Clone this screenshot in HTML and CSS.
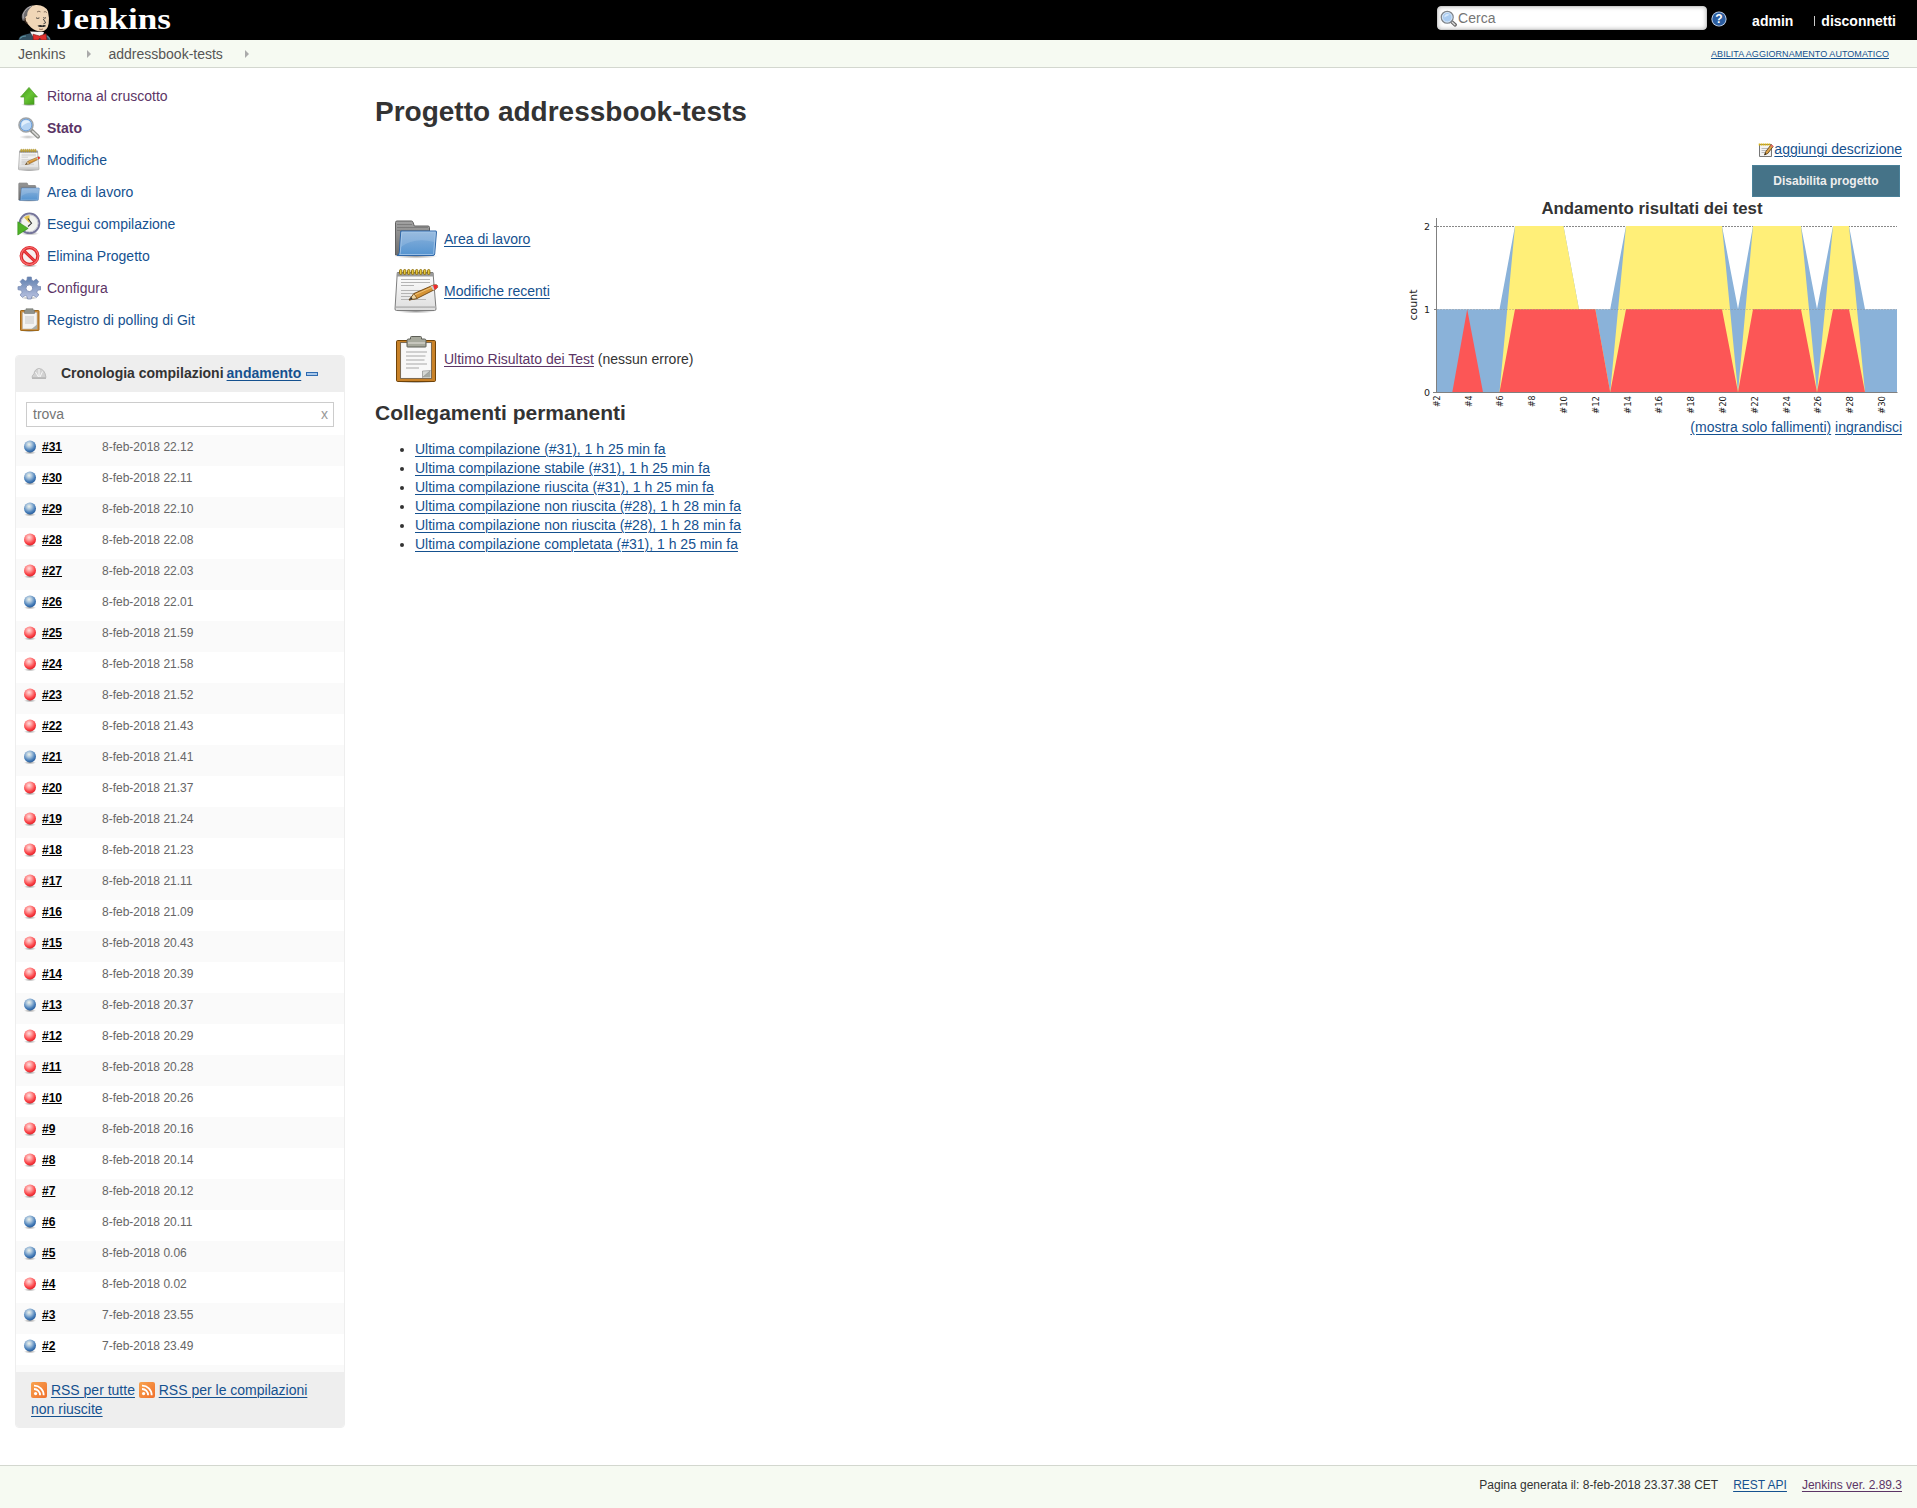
FILE: index.html
```html
<!DOCTYPE html>
<html lang="it">
<head>
<meta charset="utf-8">
<title>addressbook-tests [Jenkins]</title>
<link rel="stylesheet" href="styles.css">
</head>
<body>
<svg class="defs" width="0" height="0" aria-hidden="true">
  <defs>
    <radialGradient id="gBlue" cx=".42" cy=".32" r=".66"><stop offset="0" stop-color="#f0f3ea"/><stop offset=".35" stop-color="#a9c4dc"/><stop offset=".75" stop-color="#4a80ba"/><stop offset="1" stop-color="#2a5f9e"/></radialGradient>
    <radialGradient id="gRed" cx=".42" cy=".32" r=".66"><stop offset="0" stop-color="#ffe0e0"/><stop offset=".35" stop-color="#ff9c9c"/><stop offset=".75" stop-color="#fb4448"/><stop offset="1" stop-color="#e2242c"/></radialGradient>
    <linearGradient id="gFolder" x1="0" y1="0" x2="0" y2="1"><stop offset="0" stop-color="#8cb3dc"/><stop offset="1" stop-color="#5594d0"/></linearGradient>
    <linearGradient id="gGrey" x1="0" y1="0" x2="0" y2="1"><stop offset="0" stop-color="#a2a2a2"/><stop offset="1" stop-color="#6c6c6c"/></linearGradient>
    <linearGradient id="gPaper" x1="0" y1="0" x2="0" y2="1"><stop offset="0" stop-color="#ffffff"/><stop offset="1" stop-color="#dedede"/></linearGradient>
    <linearGradient id="gUp" x1="0" y1="0" x2="1" y2="1"><stop offset="0" stop-color="#3f9a18"/><stop offset=".5" stop-color="#69c436"/><stop offset="1" stop-color="#3a9810"/></linearGradient>
    <linearGradient id="gGear" x1="0" y1="0" x2="0" y2="1"><stop offset="0" stop-color="#5f7fae"/><stop offset="1" stop-color="#bcc4e2"/></linearGradient>
    <linearGradient id="gRss" x1="0" y1="0" x2="1" y2="1"><stop offset="0" stop-color="#f8a450"/><stop offset="1" stop-color="#f0702c"/></linearGradient>
    <radialGradient id="gShade"><stop offset="0" stop-color="#000" stop-opacity=".4"/><stop offset="1" stop-color="#000" stop-opacity="0"/></radialGradient>
  </defs>
  <symbol id="ball-blue" viewBox="0 0 16 16"><ellipse cx="8" cy="13.6" rx="6" ry="1.8" fill="url(#gShade)"/><circle cx="8" cy="7.6" r="6" fill="url(#gBlue)"/></symbol>
  <symbol id="ball-red" viewBox="0 0 16 16"><ellipse cx="8" cy="13.6" rx="6" ry="1.8" fill="url(#gShade)"/><circle cx="8" cy="7.6" r="6" fill="url(#gRed)"/></symbol>
  <symbol id="up" viewBox="0 0 24 24"><ellipse cx="12" cy="20.6" rx="8" ry="1.7" fill="url(#gShade)"/><path d="M12 3.4 20.4 13H17v7.3H7.4V13H3.6z" fill="url(#gUp)" stroke="#4a9a24" stroke-width=".7"/></symbol>
  <symbol id="search" viewBox="0 0 24 24"><ellipse cx="11" cy="21" rx="9" ry="2" fill="url(#gShade)" opacity=".6"/><path d="M14.5 14.5 21 20.6" stroke="#8b8d88" stroke-width="4" stroke-linecap="round"/><path d="M15.6 15.4 20.9 20.4" stroke="#d8d8d6" stroke-width="1.6" stroke-linecap="round"/><circle cx="9" cy="9" r="7" fill="#b5d3f3" stroke="#a0a4a6" stroke-width="1.6"/><circle cx="9" cy="9" r="5.8" fill="none" stroke="#5f97d6" stroke-width=".8"/><path d="M4.6 8.6A4.6 4.6 0 0 1 9 4.2c2.4 0 3.6 1 4.2 2.4C10 6.800 7 8 4.600 11z" fill="#e2effc"/></symbol>
  <symbol id="search-small" viewBox="0 0 16 16"><path d="M10.500 10.500 14.300 14" stroke="#666" stroke-width="3.200" stroke-linecap="round"/><path d="M11.500 11.500 14 13.800" stroke="#ddd" stroke-width="1.300" stroke-linecap="round"/><circle cx="6.800" cy="6.800" r="5.600" fill="#a9cbf0" stroke="#808488" stroke-width="1.200"/><circle cx="6.800" cy="6.800" r="4.500" fill="none" stroke="#dfeaf5" stroke-width=".8"/><path d="M4 7a3 3 0 0 1 5-2.500z" fill="#d6e8fa"/></symbol>
  <symbol id="notepad" viewBox="0 0 48 48"><ellipse cx="24" cy="44.4" rx="19" ry="2" fill="url(#gShade)"/><path d="M5.300 5.500H41l3 36.500q0 1.500-1.500 1.500h-38Q3 43.500 3 42z" fill="url(#gPaper)" stroke="#7e7e7e"/><path d="M5 6h36.500l.3 3.500H4.800z" fill="#9a9a9a"/><path d="M4 40.200h39.500" stroke="#b9b9b9" stroke-width="1.800"/><g fill="#e8c93e" stroke="#8a6b08" stroke-width=".9"><rect x="7.500" y="2.500" width="2.400" height="5" rx="1.200"/><rect x="11.500" y="2.500" width="2.400" height="5" rx="1.200"/><rect x="15.500" y="2.500" width="2.400" height="5" rx="1.200"/><rect x="19.500" y="2.500" width="2.400" height="5" rx="1.200"/><rect x="23.500" y="2.500" width="2.400" height="5" rx="1.200"/><rect x="27.500" y="2.500" width="2.400" height="5" rx="1.200"/><rect x="31.500" y="2.500" width="2.400" height="5" rx="1.200"/><rect x="35.500" y="2.500" width="2.400" height="5" rx="1.200"/></g><path d="M9 12.500h29M9 15.500h29M9 18.500h13M9 23.500h24M9 26.500h20M9 29.500h12M9 32.500h25" stroke="#b4b4b4"/><path d="M17 33l5-6.500L41.500 18q3-1 4 .6t-1.300 3.200L25 31.500z" fill="#d69435" stroke="#6b4312" stroke-width=".9"/><path d="M17 33l5-6.500 3 5z" fill="#ecd4a2" stroke="#6b4312" stroke-width=".7"/><path d="M17 33l2.400-3 1.200 1.900z" fill="#333"/><path d="M38.500 19.400 41.700 18q3-1 3.800.6t-1.300 3.200l-3 1.500z" fill="#c9cdd0"/><path d="M41 18.300q3.700-1.300 4.500.3t-1.300 3.200l-1.700.9z" fill="#ee2b2b"/><path d="M23 27.700 40 20.300" stroke="#efc278" stroke-width="1"/></symbol>
  <symbol id="folder" viewBox="0 0 48 48"><ellipse cx="24" cy="41.200" rx="22" ry="2.500" fill="url(#gShade)"/><path d="M3.500 40V7.500q0-1.500 1.500-1.500h14.500q1 0 1.500 1.200L22.300 11H36q1.500 0 1.500 1.500V40z" fill="url(#gGrey)" stroke="#606060"/><path d="M5 9.500h15M5 12.500h31M5 15.500h32" stroke="#757575" stroke-width=".8"/><path d="M8.800 16H44q.6 0 .5.800L42.700 39q-.2 1.500-1.700 1.500H5q2-.6 2.300-3z" fill="url(#gFolder)" stroke="#2f67a8"/><path d="M9.800 17.200h33.500L41.700 38.500q-.1 1-1 1H7.700q.6-1 .6-2z" fill="none" stroke="#a9c9ea" stroke-width=".8"/><path d="M9.700 17.700H43l-.8 9.300Q22 22 9 32z" fill="#fff" opacity=".13"/></symbol>
  <symbol id="clock" viewBox="0 0 24 24"><ellipse cx="13" cy="21.500" rx="9" ry="2" fill="url(#gShade)"/><circle cx="12.500" cy="11.300" r="9.800" fill="#f2f3ee" stroke="#74749a" stroke-width="2"/><circle cx="12.500" cy="11.300" r="8.500" fill="none" stroke="#c8c8d4"/><path d="M12.500 11.300 7 5.500Q9 3.600 12.500 3.300z" fill="#e3c34e"/><path d="M11 6.500 14.500 11.300 11 14.500" fill="none" stroke="#333" stroke-width="1.100"/><path d="M.8 9.800V23l10.400-6.600z" fill="#50b227" stroke="#2e8a12" stroke-width=".6"/></symbol>
  <symbol id="stop" viewBox="0 0 24 24"><ellipse cx="12.500" cy="21.700" rx="8" ry="1.800" fill="url(#gShade)"/><circle cx="12.500" cy="12" r="8.300" fill="#f7eeee" stroke="#da2428" stroke-width="3.200"/><path d="M7 6.800 18 17.300" stroke="#da2428" stroke-width="3"/><circle cx="12.500" cy="12" r="8.600" fill="none" stroke="#f86a6c" stroke-width="1.300"/><path d="M7 6.800 18 17.300" stroke="#ee4448" stroke-width="1.200"/></symbol>
  <symbol id="gear" viewBox="0 0 24 24"><ellipse cx="12.500" cy="22" rx="8" ry="1.600" fill="url(#gShade)"/><g fill="url(#gGear)" stroke="#7486b0" stroke-width=".7"><path d="M10.300 1h4l.5 3.300 1.700.8 2.800-2 2.400 2.500-1.900 2.700.8 1.900 3.400.5v3l-3.400.6-.8 2 2 2.700-2.400 2.400-2.700-1.900-1.900.8-.6 2.700h-3.600l-.6-2.700-1.800-.8-2.800 1.900-2.300-2.400 2-2.800-.8-1.900-3.300-.6v-3l3.300-.5.800-1.900-2-2.700L5.600 3l2.800 2 1.500-.700z"/></g><circle cx="12.300" cy="12.200" r="3.400" fill="#fff" stroke="#8090b8"/></symbol>
  <symbol id="clipboard" viewBox="0 0 48 48"><ellipse cx="24" cy="47" rx="18" ry="1.500" fill="url(#gShade)"/><rect x="4.500" y="5.500" width="39" height="41" rx="1.200" fill="#c98228" stroke="#6f4309"/><rect x="8.500" y="7.500" width="31" height="36" fill="#efefef" stroke="#7e6b52"/><path d="M9.500 8.500h29v27l-8 7H9.500z" fill="#f8f8f8"/><path d="M38.500 36v6.500h-8v-6.500z" fill="#a5aaa4"/><path d="M38.500 35.500 30.500 42.500V36z" fill="#d5d8d4" stroke="#888" stroke-width=".6"/><path d="M14 17h21M14 21h19.500M14 25h18.500M14 29h21M14 33h13" stroke="#c2c2c2" stroke-width="1.600"/><path d="M18.500 4V2.500q0-1 1-1h9q1 0 1 1V4h3q1.500 0 1.500 1.500v6q0 .5-.6.500H15.600q-.6 0-.6-.5v-6Q15 4 16.500 4z" fill="#a6a89c" stroke="#5d5e57"/><path d="M16 8h17" stroke="#d0d1c8" stroke-width="1.500"/></symbol>
  <symbol id="clipboard-small" viewBox="0 0 24 24"><ellipse cx="12.500" cy="23.200" rx="8" ry=".8" fill="url(#gShade)"/><rect x="3.500" y="2.500" width="18.500" height="20" rx=".6" fill="#c98a3c" stroke="#a06818"/><path d="M5.500 4.500h14.500V21H5.500z" fill="#f4f4f4" stroke="#b9b2a6" stroke-width=".6"/><path d="M8 8h9v8H8z" fill="#dedede"/><path d="M20 16.500V21h-5.500z" fill="#a9ada8"/><path d="M9 2V.7h7V2h1.500v3.500h-10V2z" fill="#8f928c" stroke="#696b66" stroke-width=".5"/></symbol>
  <symbol id="rss" viewBox="0 0 16 16"><rect width="16" height="16" rx="2" fill="url(#gRss)"/><circle cx="4.600" cy="11.600" r="1.600" fill="#fff"/><path d="M3 7a6 6 0 0 1 6.100 6.200M3 3.600a9.500 9.500 0 0 1 9.700 9.600" fill="none" stroke="#fff" stroke-width="1.800"/></symbol>
  <symbol id="note" viewBox="0 0 16 16"><path d="M1.500 2.500h12v12h-12z" fill="#f3f3f3" stroke="#777"/><path d="M3.500 6.500h7M3.500 8.500h6M3.500 10.500h4" stroke="#bbb"/><path d="M1.500 1.500v2M3.500 1.500v2M5.500 1.500v2M7.500 1.500v2M9.500 1.500v2M11.500 1.500v2" stroke="#d9b313" stroke-width="1.500"/><path d="M6.500 13 7.700 9.700 13 2.800l2.200 1.600-5.400 7z" fill="#dda34a" stroke="#553a10" stroke-width=".8"/><path d="M6.500 13l.7-2 1.200 1z" fill="#222"/><path d="M12.300 3.500 13.200 2.400l2.300 1.600-.9 1.200z" fill="#e66"/></symbol>
  <symbol id="help" viewBox="0 0 16 16"><circle cx="8" cy="8" r="7.600" fill="#c9d7ea"/><circle cx="8" cy="8" r="6.700" fill="#2b5da0"/></symbol>
</svg>

<header class="header">
  <a class="logo">
    <svg width="180" height="40" viewBox="0 0 180 40">
      <path d="M18.500 40q.5-4 5-5l8-2 12 .500q6 1 7 6.500z" fill="#335061"/>
      <path d="M20 38.500q2-2.500 6-2.500M46.500 36q2.500 1 3.500 3.500" stroke="#5f93a3" stroke-width="1.200" fill="none"/>
      <path d="M30 31.500 34 38l8-1 2-5z" fill="#f4f4f4"/>
      <path d="M25 13q2-7.500 11-8 9-.3 12 6.500 1.500 6.500.7 12-1.200 7.500-7.200 8-6 0-10.500-4-3.500-3-5-6.500-2-4-1-8z" fill="#f0d6b7"/>
      <path d="M33 5.300q-6.500 1.200-9.300 6Q20.500 16 22.500 20.500l2 .5 1-4 1.700-1.500q-.7-4.500 5.800-10.200z" fill="#6d6b6d"/>
      <path d="M23.300 18.500q-1-4 1.200-7 2.500-4 6.500-5.200" stroke="#b9b6b9" stroke-width=".9" fill="none"/>
      <path d="M26 18q-2 1-.8 3.500t2.600 1.500" fill="none" stroke="#6a4a38" stroke-width=".8"/>
      <path d="M37 12q2-1.500 3.500-.2M43.800 12q1.700-1 3 .6" fill="none" stroke="#5a463a" stroke-width=".7"/>
      <path d="M36 17.800q1.800 1.200 3.400.1M43.200 17.600q1.400 1.100 2.800.1M43.300 19l2.400 3.800-2.200.9" fill="none" stroke="#333" stroke-width=".9"/>
      <path d="M37.500 25.800q2.700-1.500 4.800-.3 2-1.100 3.900.6-1.900 1.200-3.900.6-2.900.9-4.800-.9z" fill="#222"/>
      <path d="M39 29q2 1 4 0" fill="none" stroke="#8a5a46" stroke-width=".8"/>
      <path d="M33 34.200l6.500 1.800L46 33.700l.8 6.300h-5.600l-1.400-2-1.400 2h-5.200z" fill="#e0302e" stroke="#7a1612" stroke-width=".6"/>
      <text class="wordmark" x="56" y="28.500" textLength="115" lengthAdjust="spacingAndGlyphs">Jenkins</text>
    </svg>
  </a>
  <div class="header-tools">
    <div class="search"><svg width="17" height="17"><use href="#search-small"/></svg><span>Cerca</span></div>
    <span class="help"><svg width="16" height="16"><use href="#help"/><text x="8" y="12.300">?</text></svg></span>
    <a class="user">admin</a>
    <span class="bar"></span>
    <a class="logout">disconnetti</a>
  </div>
</header>

<nav class="breadcrumbs">
  <a>Jenkins</a><i class="chev"></i><a>addressbook-tests</a><i class="chev"></i>
  <a class="refresh">ABILITA AGGIORNAMENTO AUTOMATICO</a>
</nav>

<div class="page">
  <aside class="side">
    <ul class="tasks">
      <li><svg><use href="#up"/></svg><a class="visited">Ritorna al cruscotto</a></li>
      <li><svg><use href="#search"/></svg><a class="visited current">Stato</a></li>
      <li><svg><use href="#notepad"/></svg><a>Modifiche</a></li>
      <li><svg><use href="#folder"/></svg><a>Area di lavoro</a></li>
      <li><svg><use href="#clock"/></svg><a>Esegui compilazione</a></li>
      <li><svg><use href="#stop"/></svg><a>Elimina Progetto</a></li>
      <li><svg><use href="#gear"/></svg><a class="visited">Configura</a></li>
      <li><svg><use href="#clipboard-small"/></svg><a>Registro di polling di Git</a></li>
    </ul>

    <section class="history">
      <div class="history-head">
        <svg width="16" height="13" viewBox="0 0 16 13"><path d="M1 10.500Q1 8 3 7q.5-5 5-5.500 6 .5 7 9z" fill="#d2d2d2" stroke="#b4b4b4" stroke-width=".8"/><path d="M8 2v8M4.500 5l3 5M11.500 4.500 9 10" stroke="#f7f7f7"/><path d="M1 11.500h14" stroke="#b8b8b8"/></svg>
        <b>Cronologia compilazioni</b><a class="u">andamento</a><i class="collapse"></i>
      </div>
      <div class="find"><span>trova</span><span class="clear">x</span></div>
      <ul class="builds">
        <li><svg><use href="#ball-blue"/></svg><a>#31</a><span>8-feb-2018 22.12</span></li>
        <li><svg><use href="#ball-blue"/></svg><a>#30</a><span>8-feb-2018 22.11</span></li>
        <li><svg><use href="#ball-blue"/></svg><a>#29</a><span>8-feb-2018 22.10</span></li>
        <li><svg><use href="#ball-red"/></svg><a>#28</a><span>8-feb-2018 22.08</span></li>
        <li><svg><use href="#ball-red"/></svg><a>#27</a><span>8-feb-2018 22.03</span></li>
        <li><svg><use href="#ball-blue"/></svg><a>#26</a><span>8-feb-2018 22.01</span></li>
        <li><svg><use href="#ball-red"/></svg><a>#25</a><span>8-feb-2018 21.59</span></li>
        <li><svg><use href="#ball-red"/></svg><a>#24</a><span>8-feb-2018 21.58</span></li>
        <li><svg><use href="#ball-red"/></svg><a>#23</a><span>8-feb-2018 21.52</span></li>
        <li><svg><use href="#ball-red"/></svg><a>#22</a><span>8-feb-2018 21.43</span></li>
        <li><svg><use href="#ball-blue"/></svg><a>#21</a><span>8-feb-2018 21.41</span></li>
        <li><svg><use href="#ball-red"/></svg><a>#20</a><span>8-feb-2018 21.37</span></li>
        <li><svg><use href="#ball-red"/></svg><a>#19</a><span>8-feb-2018 21.24</span></li>
        <li><svg><use href="#ball-red"/></svg><a>#18</a><span>8-feb-2018 21.23</span></li>
        <li><svg><use href="#ball-red"/></svg><a>#17</a><span>8-feb-2018 21.11</span></li>
        <li><svg><use href="#ball-red"/></svg><a>#16</a><span>8-feb-2018 21.09</span></li>
        <li><svg><use href="#ball-red"/></svg><a>#15</a><span>8-feb-2018 20.43</span></li>
        <li><svg><use href="#ball-red"/></svg><a>#14</a><span>8-feb-2018 20.39</span></li>
        <li><svg><use href="#ball-blue"/></svg><a>#13</a><span>8-feb-2018 20.37</span></li>
        <li><svg><use href="#ball-red"/></svg><a>#12</a><span>8-feb-2018 20.29</span></li>
        <li><svg><use href="#ball-red"/></svg><a>#11</a><span>8-feb-2018 20.28</span></li>
        <li><svg><use href="#ball-red"/></svg><a>#10</a><span>8-feb-2018 20.26</span></li>
        <li><svg><use href="#ball-red"/></svg><a>#9</a><span>8-feb-2018 20.16</span></li>
        <li><svg><use href="#ball-red"/></svg><a>#8</a><span>8-feb-2018 20.14</span></li>
        <li><svg><use href="#ball-red"/></svg><a>#7</a><span>8-feb-2018 20.12</span></li>
        <li><svg><use href="#ball-blue"/></svg><a>#6</a><span>8-feb-2018 20.11</span></li>
        <li><svg><use href="#ball-blue"/></svg><a>#5</a><span>8-feb-2018 0.06</span></li>
        <li><svg><use href="#ball-red"/></svg><a>#4</a><span>8-feb-2018 0.02</span></li>
        <li><svg><use href="#ball-blue"/></svg><a>#3</a><span>7-feb-2018 23.55</span></li>
        <li><svg><use href="#ball-blue"/></svg><a>#2</a><span>7-feb-2018 23.49</span></li>
      </ul>
      <div class="feeds"><svg><use href="#rss"/></svg> <a class="u">RSS per tutte</a> <svg><use href="#rss"/></svg> <a class="u">RSS per le compilazioni<br>non riuscite</a></div>
    </section>
  </aside>

  <main class="main">
    <div class="content">
      <h1>Progetto addressbook-tests</h1>
      <div class="shortcuts">
        <div><svg><use href="#folder"/></svg><a class="u">Area di lavoro</a></div>
        <div><svg><use href="#notepad"/></svg><a class="u">Modifiche recenti</a></div>
        <div class="results"><svg><use href="#clipboard"/></svg><p><a class="u visited">Ultimo Risultato dei Test</a> (nessun errore)</p></div>
      </div>
      <h2>Collegamenti permanenti</h2>
      <ul class="permalinks">
        <li><a class="u">Ultima compilazione (#31), 1 h 25 min fa</a></li>
        <li><a class="u">Ultima compilazione stabile (#31), 1 h 25 min fa</a></li>
        <li><a class="u">Ultima compilazione riuscita (#31), 1 h 25 min fa</a></li>
        <li><a class="u">Ultima compilazione non riuscita (#28), 1 h 28 min fa</a></li>
        <li><a class="u">Ultima compilazione non riuscita (#28), 1 h 28 min fa</a></li>
        <li><a class="u">Ultima compilazione completata (#31), 1 h 25 min fa</a></li>
      </ul>
    </div>

    <div class="trend">
      <div class="describe"><svg width="16" height="16"><use href="#note"/></svg><a class="u">aggiungi descrizione</a></div>
      <button class="disable" type="button">Disabilita progetto</button>
      <div class="trend-title">Andamento risultati dei test</div>
      <svg class="chart" width="500" height="200" viewBox="1402 215 500 200">
        <path class="grid" d="M1437 226.500H1897"/>
        <path fill="#8ab2d9" d="M1436.500 309.300H1499.500L1515 226H1563.500L1579 309.300H1610.200L1626 226H1722L1738 309L1753 226H1801L1817 309L1833 226H1849L1865 309.300H1897V392.300H1436.500z"/>
        <path fill="#ffef78" d="M1499.500 392.300 1515 226H1563.500L1579 309.300H1595.300L1610.200 392.300 1626 226H1722L1738 392.300 1753 226H1801L1817 392.300 1833 226H1849L1865 392.300z"/>
        <path fill="#fc5656" d="M1452.300 392.300 1467.200 309.300 1483 392.300zM1499.500 392.300 1515 309.300H1595.300L1610.200 392.300 1626 309.300H1722L1738 392.300 1753 309.300H1801L1817 392.300 1833 309.300H1849L1865 392.300z"/>
        <path class="grid faint" d="M1437 309.500H1897"/>
        <path class="axis" d="M1436.500 218V392.500M1433 392.500H1897.500M1434 226.500h3M1434 309.500h3"/>
        <g class="ticks">
          <text x="1424" y="229.800" textLength="6">2</text><text x="1424" y="312.800" textLength="6">1</text><text x="1424" y="395.500" textLength="6">0</text>
        </g>
        <text class="ylabel" transform="translate(1416.500 320.500) rotate(-90)" textLength="31" lengthAdjust="spacingAndGlyphs">count</text>
        <g class="ticks">
          <text transform="translate(1440 407) rotate(-90)" textLength="11.500" lengthAdjust="spacingAndGlyphs">#2</text>
          <text transform="translate(1471.700 407) rotate(-90)" textLength="11.500" lengthAdjust="spacingAndGlyphs">#4</text>
          <text transform="translate(1503 407) rotate(-90)" textLength="11.500" lengthAdjust="spacingAndGlyphs">#6</text>
          <text transform="translate(1535 407) rotate(-90)" textLength="11.500" lengthAdjust="spacingAndGlyphs">#8</text>
          <text transform="translate(1567 414) rotate(-90)" textLength="18" lengthAdjust="spacingAndGlyphs">#10</text>
          <text transform="translate(1598.800 414) rotate(-90)" textLength="18" lengthAdjust="spacingAndGlyphs">#12</text>
          <text transform="translate(1630.500 414) rotate(-90)" textLength="18" lengthAdjust="spacingAndGlyphs">#14</text>
          <text transform="translate(1662.200 414) rotate(-90)" textLength="18" lengthAdjust="spacingAndGlyphs">#16</text>
          <text transform="translate(1694 414) rotate(-90)" textLength="18" lengthAdjust="spacingAndGlyphs">#18</text>
          <text transform="translate(1725.700 414) rotate(-90)" textLength="18" lengthAdjust="spacingAndGlyphs">#20</text>
          <text transform="translate(1757.500 414) rotate(-90)" textLength="18" lengthAdjust="spacingAndGlyphs">#22</text>
          <text transform="translate(1789.500 414) rotate(-90)" textLength="18" lengthAdjust="spacingAndGlyphs">#24</text>
          <text transform="translate(1821 414) rotate(-90)" textLength="18" lengthAdjust="spacingAndGlyphs">#26</text>
          <text transform="translate(1852.700 414) rotate(-90)" textLength="18" lengthAdjust="spacingAndGlyphs">#28</text>
          <text transform="translate(1884.500 414) rotate(-90)" textLength="18" lengthAdjust="spacingAndGlyphs">#30</text>
        </g>
      </svg>
      <div class="trend-links"><a class="u">(mostra solo fallimenti)</a> <a class="u">ingrandisci</a></div>
    </div>
  </main>
</div>

<footer class="footer">
  <span>Pagina generata il: 8-feb-2018 23.37.38 CET</span>
  <a class="u">REST API</a>
  <a class="u visited">Jenkins ver. 2.89.3</a>
</footer>
</body>
</html>
```
FILE: styles.css
```css
* { box-sizing: border-box; }

body {
  margin: 0;
  height: 1508px;
  display: flex;
  flex-direction: column;
  background: #fff;
  color: #333;
  font: 14px/19px "Liberation Sans", Arial, sans-serif;
}

ul { margin: 0; padding: 0; list-style: none; }
p { margin: 0; }
svg { display: block; flex: none; }
.defs { position: absolute; }
a { color: #15518f; text-decoration: none; }
.u { text-decoration: underline; text-underline-offset: 2px; text-decoration-thickness: 1px; }
.visited { color: #5c3566; }

/* top bar */
.header { display: flex; flex: none; justify-content: space-between; height: 40px; background: #000; }
.wordmark { font: bold 29.5px "Liberation Serif", serif; fill: #fff; }
.header-tools { display: flex; align-items: flex-start; padding-right: 21px; color: #fff; }
.header-tools a { color: #fff; font-weight: bold; padding-top: 12px; }
.search {
  display: flex;
  align-items: center;
  width: 270px;
  height: 24px;
  margin-top: 6px;
  padding-left: 2px;
  gap: 1px;
  border: 1px solid #ccc;
  border-radius: 4px;
  background: #fff;
  box-shadow: inset 0 0 4px #bbb;
  color: #757575;
}
.help { margin: 11px 0 0 4px; }
.help text { font: bold 12px "Liberation Sans", sans-serif; fill: #fff; text-anchor: middle; }
.header-tools .user { margin-left: 25px; }
.bar { width: 1px; height: 10px; margin: 16px 6px 0 21px; background: #ccc; }

/* breadcrumb strip */
.breadcrumbs {
  display: flex;
  flex: none;
  align-items: center;
  height: 28px;
  padding: 1px 28px 0 18px;
  border-bottom: 1px solid #d3d7cf;
  background: #f6faf2;
}
.breadcrumbs a { color: #555; }
.chev {
  margin: 0 17px 0 22px;
  border: 4px solid transparent;
  border-left-color: #aaa;
  border-right: 0;
}
.breadcrumbs .refresh { margin-left: auto; font-size: 9px; letter-spacing: .05px; color: #15518f; text-decoration: underline; text-underline-offset: 1px; }

.page { display: flex; flex: 1; min-height: 0; }

/* sidebar */
.side { width: 375px; padding: 12px 30px 0 15px; }
.tasks li { display: flex; align-items: center; gap: 6px; height: 32px; padding-left: 2px; }
.tasks svg { width: 24px; height: 24px; }
.current { font-weight: bold; }

.history { margin-top: 19px; border: 1px solid #eee; border-radius: 4px; overflow: hidden; }
.history-head {
  display: flex;
  align-items: center;
  height: 36px;
  padding: 0 0 2px 15px;
  background: #eee;
}
.history-head b { margin: 0 3px 0 14px; }
.history-head a { font-weight: bold; }
.collapse { width: 12px; height: 4px; margin: 1px 0 0 5px; border: 1px solid #2f6bb0; background: #a9c8ea; }
.find {
  display: flex;
  justify-content: space-between;
  height: 25px;
  margin: 10px;
  padding: 2px 5px 0 6px;
  border: 1px solid #ccc;
  color: #757575;
}
.clear { color: #999; }
.builds { margin-top: -2px; padding-bottom: 7px; background: #fafafa; }
.builds li { display: flex; height: 31px; padding: 4px 0 0 6px; font-size: 12px; line-height: 16px; background: #fff; }
.builds li:nth-child(odd) { background: #fafafa; }
.builds svg { width: 16px; height: 16px; }
.builds a { width: 60px; margin-left: 4px; font-weight: bold; color: #000; text-decoration: underline; text-underline-offset: 1px; }
.builds span { color: #666; }
.feeds { height: 55px; padding: 9px 15px 0; background: #eee; }
.feeds svg { display: inline-block; width: 16px; height: 16px; vertical-align: -3px; }

/* project page */
.main { display: flex; flex: 1; justify-content: space-between; padding-right: 15px; }
h1 { margin: 27px 0 0; font-size: 28px; line-height: 34px; }
.shortcuts { padding: 84px 0 0 17px; }
.shortcuts div { display: flex; align-items: center; gap: 4px; height: 52px; }
.shortcuts .results { margin-top: 16px; }
.shortcuts svg { width: 48px; height: 48px; }
h2 { margin: 15px 0 0; font-size: 21px; line-height: 26px; }
.permalinks { margin-top: 14px; padding-left: 40px; list-style: disc; }

.trend { display: flex; flex-direction: column; align-items: flex-end; width: 500px; padding-top: 72px; }
.describe { display: flex; }
.describe svg { margin: 2px 0 0; }
.disable {
  width: 148px;
  height: 32px;
  margin: 6px 2px 0 0;
  padding: 0;
  border: 1px solid #4a8098;
  background: #457388;
  color: #eee;
  font: bold 12px "Liberation Sans", Arial, sans-serif;
}
.trend-title { align-self: center; font-size: 16.8px; line-height: 18px; font-weight: bold; padding-top: 3px; height: 18px; }
.chart text { font-family: "DejaVu Sans", sans-serif; fill: #222; }
.ticks { font-size: 9.5px; }
.ylabel { font-size: 11px; }
.grid { stroke: #888; stroke-dasharray: 2 1; }
.faint { opacity: .35; }
.axis { fill: none; stroke: #808080; }
.trend-links { margin-top: 3px; }

/* page footer */
.footer {
  display: flex;
  flex: none;
  justify-content: flex-end;
  gap: 15px;
  height: 43px;
  padding: 10px 15px 0 0;
  border-top: 1px solid #d3d7cf;
  background: #f6faf2;
  font-size: 12px;
}
```
